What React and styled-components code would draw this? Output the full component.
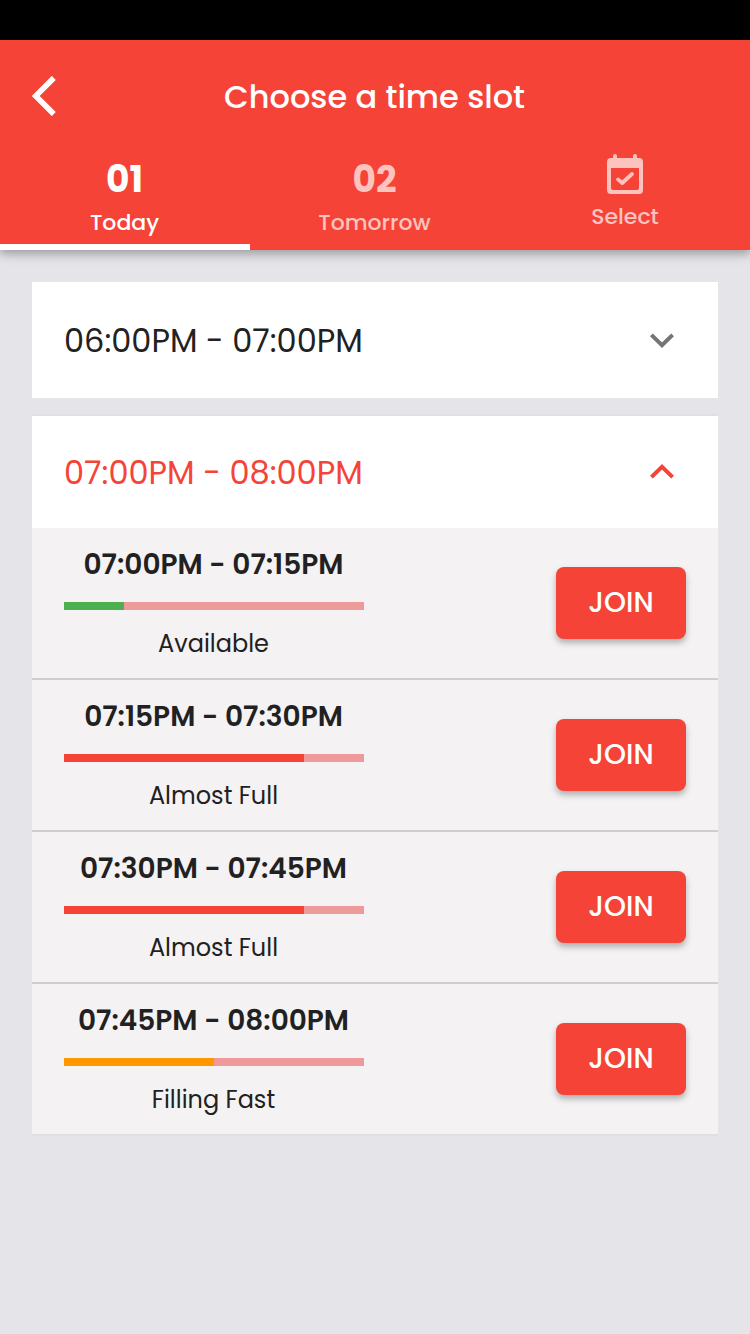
import React from "react";
import styled, { createGlobalStyle } from "styled-components";

const GlobalStyle = createGlobalStyle`
  *, *::before, *::after { box-sizing: border-box; }
  body {
    margin: 0;
    background: #e4e4e9;
    color: #212121;
    font-family: Poppins, Inter, "Liberation Sans", sans-serif;
  }
`;

const Screen = styled.main`
  width: 750px;
  min-height: 1334px;
  background: #e4e4e9;
`;

const StatusBar = styled.div`
  height: 40px;
  background: #000;
`;

const Header = styled.header`
  height: 210px;
  display: flex;
  flex-direction: column;
  background: #f54337;
  color: #fff;
  box-shadow: 0 4px 8px rgba(0, 0, 0, 0.22), 0 1px 16px rgba(0, 0, 0, 0.16);
`;

const TitleRow = styled.div`
  height: 112px;
  padding: 0 32px;
  display: grid;
  grid-template-columns: 24px 1fr 24px;
  align-items: center;
`;

const BackButton = styled.button`
  display: flex;
  padding: 0;
  border: 0;
  background: none;
  color: inherit;
`;

const Title = styled.h1`
  margin: 0;
  padding: 2px 1px 0 0;
  text-align: center;
  font-size: 32px;
  font-weight: 500;
  line-height: 48px;
`;

const Tabs = styled.nav`
  flex: 1;
  display: grid;
  grid-template-columns: repeat(3, 1fr);
`;

const Tab = styled.button`
  display: flex;
  flex-direction: column;
  align-items: center;
  padding: ${(p) => (p.$icon ? "2px 0 0" : "4px 1px 0 0")};
  border: 0;
  border-bottom: 6px solid ${(p) => (p.$active ? "#fff" : "transparent")};
  background: none;
  font: inherit;
  color: ${(p) => (p.$active ? "#fff" : "#fcc3bf")};
`;

const TabNumber = styled.span`
  font-size: 36px;
  font-weight: 700;
  line-height: 48px;
`;

const TabLabel = styled.span`
  font-size: 22px;
  font-weight: 500;
  line-height: 32px;
  margin-top: ${(p) => p.$gap}px;
`;

const SlotList = styled.section`
  padding: 32px 32px 0;
  display: flex;
  flex-direction: column;
  gap: 16px;
`;

const Card = styled.article`
  background: #fff;
  border-top: ${(p) => (p.$open ? "2px solid #e0e0e0" : "0")};
`;

const CardHeader = styled.div`
  height: ${(p) => (p.$open ? 112 : 116)}px;
  padding: 0 44px 0 32px;
  display: flex;
  align-items: center;
  justify-content: space-between;
  color: ${(p) => (p.$open ? "#f54337" : "#212121")};
`;

const CardTime = styled.span`
  padding-top: 2px;
  font-size: 32px;
  font-weight: 400;
  line-height: 48px;
`;

const ChevronIcon = styled.svg`
  width: 24px;
  height: 15px;
  margin-bottom: ${(p) => (p.$open ? 1 : 0)}px;
  color: ${(p) => (p.$open ? "#f54337" : "#757575")};
`;

const SlotRow = styled.div`
  height: 152px;
  padding: 0 32px;
  display: flex;
  align-items: center;
  justify-content: space-between;
  background: #f4f2f3;
  border-bottom: 2px solid #cecece;
  &:last-child { border-bottom-color: #e0e0e0; }
`;

const SlotInfo = styled.div`
  width: 300px;
  display: flex;
  flex-direction: column;
  align-items: center;
`;

const SlotTime = styled.div`
  padding-right: 1px;
  font-size: 28px;
  font-weight: 600;
  line-height: 40px;
`;

const Track = styled.div`
  width: 100%;
  height: 8px;
  margin: 17px 0;
  background: #ef9a9a;
`;

const Fill = styled.div`
  width: ${(p) => p.$value}%;
  height: 100%;
  background: ${(p) => p.$color};
`;

const SlotStatus = styled.div`
  padding: 0 1px 1px 0;
  font-size: 24px;
  font-weight: 400;
  line-height: 33px;
`;

const JoinButton = styled.button`
  width: 130px;
  height: 72px;
  padding: 0;
  border: 0;
  border-radius: 8px;
  background: #f54337;
  color: #fff;
  font: inherit;
  font-size: 28px;
  font-weight: 500;
  box-shadow: 0 4px 6px rgba(0, 0, 0, 0.28);
`;

const slots = [
  { time: "07:00PM - 07:15PM", status: "Available", value: 20, color: "#4caf50" },
  { time: "07:15PM - 07:30PM", status: "Almost Full", value: 80, color: "#f54337" },
  { time: "07:30PM - 07:45PM", status: "Almost Full", value: 80, color: "#f54337" },
  { time: "07:45PM - 08:00PM", status: "Filling Fast", value: 50, color: "#ff9800" },
];

function Chevron({ open }) {
  return (
    <ChevronIcon $open={open} viewBox="0 0 24 15" fill="none" stroke="currentColor" strokeWidth="4">
      <path d={open ? "M1.4 13.1 12 2.9 22.6 13.1" : "M1.4 1.9 12 12.1 22.6 1.9"} />
    </ChevronIcon>
  );
}

function CalendarCheck() {
  return (
    <svg width="36" height="40" viewBox="0 0 36 40" fill="currentColor">
      <path
        fillRule="evenodd"
        d="M4 4H6V2A2 2 0 0 1 10 2V4H26V2A2 2 0 0 1 30 2V4H32A4 4 0 0 1 36 8V36A4 4 0 0 1 32 40H4A4 4 0 0 1 0 36V8A4 4 0 0 1 4 4ZM4 14V34Q4 36 6 36H30Q32 36 32 34V14Z"
      />
      <path d="M11 25.4 15.2 29 25 20" fill="none" stroke="currentColor" strokeWidth="3.8" strokeLinecap="round" strokeLinejoin="round" />
    </svg>
  );
}

export default function App() {
  return (
    <Screen>
      <GlobalStyle />
      <StatusBar />
      <Header>
        <TitleRow>
          <BackButton aria-label="Back">
            <svg width="24" height="40" viewBox="0 0 24 40" fill="none" stroke="currentColor" strokeWidth="5.6">
              <path d="M21.8 1.9 3.7 20 21.8 38.1" />
            </svg>
          </BackButton>
          <Title>Choose a time slot</Title>
        </TitleRow>
        <Tabs>
          <Tab $active>
            <TabNumber>01</TabNumber>
            <TabLabel $gap={3}>Today</TabLabel>
          </Tab>
          <Tab>
            <TabNumber>02</TabNumber>
            <TabLabel $gap={3}>Tomorrow</TabLabel>
          </Tab>
          <Tab $icon>
            <CalendarCheck />
            <TabLabel $gap={7}>Select</TabLabel>
          </Tab>
        </Tabs>
      </Header>
      <SlotList>
        <Card>
          <CardHeader>
            <CardTime>06:00PM - 07:00PM</CardTime>
            <Chevron />
          </CardHeader>
        </Card>
        <Card $open>
          <CardHeader $open>
            <CardTime>07:00PM - 08:00PM</CardTime>
            <Chevron open />
          </CardHeader>
          {slots.map((s) => (
            <SlotRow key={s.time}>
              <SlotInfo>
                <SlotTime>{s.time}</SlotTime>
                <Track><Fill $value={s.value} $color={s.color} /></Track>
                <SlotStatus>{s.status}</SlotStatus>
              </SlotInfo>
              <JoinButton>JOIN</JoinButton>
            </SlotRow>
          ))}
        </Card>
      </SlotList>
    </Screen>
  );
}
